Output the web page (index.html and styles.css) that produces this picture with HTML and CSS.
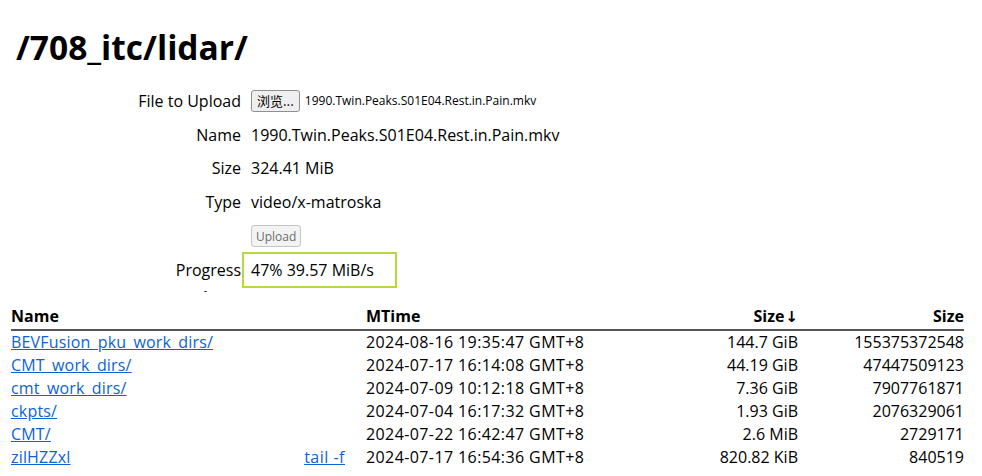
FILE: index.html
```html
<!DOCTYPE html>
<html>
<head>
<meta charset="utf-8">
<link rel="stylesheet" href="styles.css">
</head>
<body>
<h1 class="title">/708_itc/lidar/</h1>
<div class="form">
  <div class="label">File to Upload</div>
  <div class="value"><button class="btn">浏览...</button><span class="fname">1990.Twin.Peaks.S01E04.Rest.in.Pain.mkv</span></div>
  <div class="label">Name</div>
  <div class="value">1990.Twin.Peaks.S01E04.Rest.in.Pain.mkv</div>
  <div class="label">Size</div>
  <div class="value">324.41 MiB</div>
  <div class="label">Type</div>
  <div class="value">video/x-matroska</div>
  <div class="label"></div>
  <div class="value"><button class="btn disabled" disabled>Upload</button></div>
  <div class="label">Progress</div>
  <div class="value"><div class="progress">47% 39.57 MiB/s</div></div>
  <div class="label dashrow"><span class="dash">-</span></div>
  <div class="value dashrow"></div>
</div>
<table class="files">
  <colgroup>
    <col class="c1"><col class="c2"><col class="c3"><col class="c4">
  </colgroup>
  <thead>
    <tr><th class="l">Name</th><th class="l mt">MTime</th><th class="r">Size<span class="arrow">↓</span></th><th class="r">Size</th></tr>
  </thead>
  <tbody>
    <tr><td class="nm"><a href="#">BEVFusion_pku_work_dirs/</a></td><td class="mt">2024-08-16 19:35:47 GMT+8</td><td class="r">144.7 GiB</td><td class="r">155375372548</td></tr>
    <tr><td class="nm"><a href="#">CMT_work_dirs/</a></td><td class="mt">2024-07-17 16:14:08 GMT+8</td><td class="r">44.19 GiB</td><td class="r">47447509123</td></tr>
    <tr><td class="nm"><a href="#">cmt_work_dirs/</a></td><td class="mt">2024-07-09 10:12:18 GMT+8</td><td class="r">7.36 GiB</td><td class="r">7907761871</td></tr>
    <tr><td class="nm"><a href="#">ckpts/</a></td><td class="mt">2024-07-04 16:17:32 GMT+8</td><td class="r">1.93 GiB</td><td class="r">2076329061</td></tr>
    <tr><td class="nm"><a href="#">CMT/</a></td><td class="mt">2024-07-22 16:42:47 GMT+8</td><td class="r">2.6 MiB</td><td class="r">2729171</td></tr>
    <tr><td class="nm"><a href="#">zilHZZxl</a><a href="#" class="tail">tail -f</a></td><td class="mt">2024-07-17 16:54:36 GMT+8</td><td class="r">820.82 KiB</td><td class="r">840519</td></tr>
  </tbody>
</table>
</body>
</html>
```

FILE: styles.css
```css
html, body {
  background: #ffffff;
}
body {
  margin: 8px;
  font-family: "Open Sans", "Noto Sans", sans-serif;
  font-size: 16px;
  color: #000;
}
.title {
  font-size: 33.5px;
  font-weight: 700;
  margin: 17px 0 0 8px;
  line-height: 44px;
}
.form {
  display: grid;
  grid-template-columns: 233px 1fr;
  column-gap: 10px;
  grid-auto-rows: 33.8px;
  margin-top: 15px;
  align-items: center;
}
.label {
  text-align: right;
  white-space: nowrap;
}
.value {
  white-space: nowrap;
  display: flex;
  align-items: center;
}
.btn {
  font-family: "Microsoft YaHei", "Noto Sans CJK SC", "Open Sans", sans-serif;
  font-size: 13px;
  padding: 0 5px;
  height: 22px;
  border: 1px solid #8f8f8f;
  border-radius: 3px;
  background: #efefef;
  color: #000;
  margin: 0;
}
.btn.disabled {
  font-family: "Open Sans", sans-serif;
  color: #6d6d6d;
  border-color: #c4c4c4;
  background: #f3f3f3;
  font-size: 12px;
  padding: 0 4px;
}
.fname {
  font-size: 12px;
  margin-left: 5px;
}
.progress {
  margin-left: -9px;
  border: 2px solid #b7d93c;
  height: 36px;
  box-sizing: border-box;
  width: 155px;
  padding-left: 7px;
  display: flex;
  align-items: center;
}
.dashrow {
  height: 12px;
}
.form .dashrow {
  align-self: start;
}
.dash {
  display: inline-block;
  margin-right: 34px;
  font-size: 10px;
  line-height: 6px;
  vertical-align: top;
}
.files {
  border-collapse: collapse;
  table-layout: fixed;
  width: 953px;
  margin: -16px 0 0 3px;
}
.c1 { width: 335px; }
.c2 { width: 254px; }
.c3 { width: 198px; }
.c4 { width: 166px; }
.files th {
  font-weight: 700;
  height: 23px;
  padding: 0;
  border-bottom: 2px solid #555;
  line-height: 23px;
}
.arrow {
  font-family: "DejaVu Sans", sans-serif;
  font-weight: 700;
  font-size: 15px;
  margin-left: 1px;
}
.files td {
  padding: 0;
  height: 23px;
  line-height: 23px;
  white-space: nowrap;
}
.files td.mt {
  letter-spacing: 0.4px;
}
.files td.nm {
  letter-spacing: 0.18px;
}
.l { text-align: left; }
.r, .files td.r { text-align: right; }
.mt { padding-left: 20px !important; }
a {
  color: #0b63d6;
  text-decoration: underline;
}
.tail {
  float: right;
  letter-spacing: 0.5px;
  margin-right: 1px;
}
```
